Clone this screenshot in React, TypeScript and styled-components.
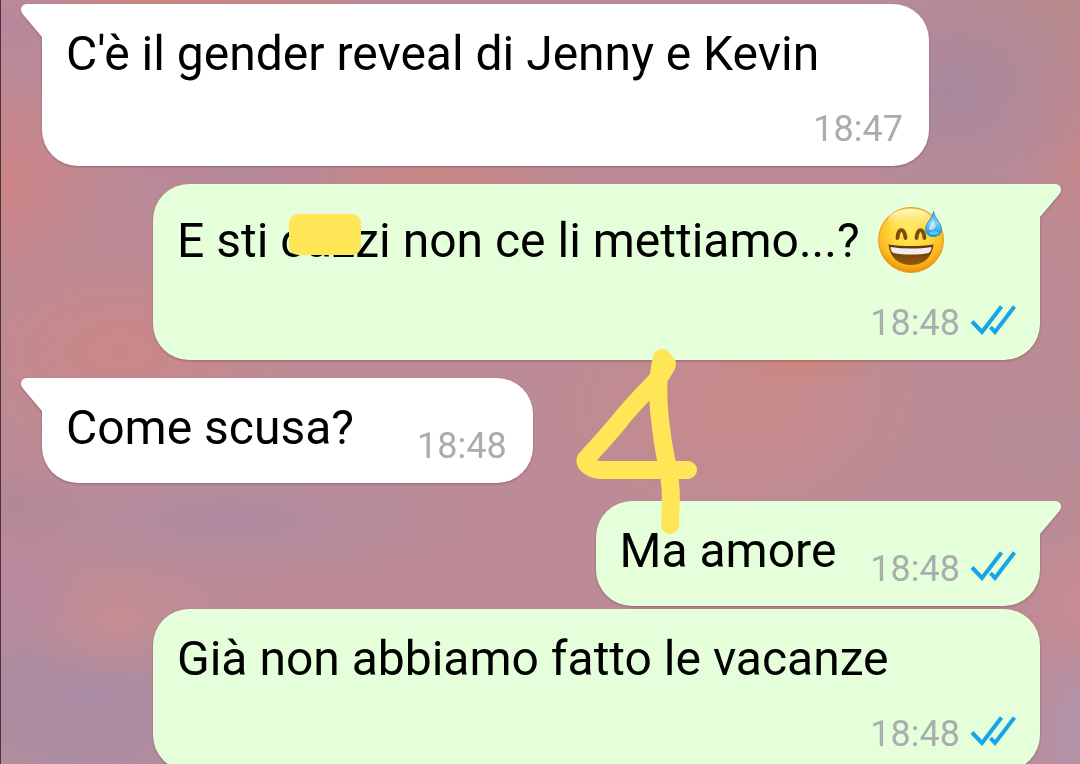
import React from "react";
import styled, { createGlobalStyle, css } from "styled-components";

const GlobalStyle = createGlobalStyle`
  * { box-sizing: border-box; }
  body { margin: 0; background: #bd8b95; }
`;

const Chat = styled.main`
  position: relative;
  height: 100vh;
  overflow: hidden;
  display: flex;
  flex-direction: column;
  padding: 4px 40px 0 41px;
  border-left: 1px solid #4d3239;
  font-family: Roboto, "Liberation Sans", sans-serif;
  color: #000;
  background:
    radial-gradient(ellipse 110px 90px at 1% 3%, #b7889c, transparent),
    radial-gradient(ellipse 110px 120px at 0% 24%, #cd8486, transparent),
    radial-gradient(ellipse 220px 30px at 14% 0%, #cc8682, transparent),
    radial-gradient(ellipse 150px 130px at 88% 12%, #a8889d, transparent),
    radial-gradient(ellipse 60px 130px at 100% 20%, #c3878a, transparent),
    radial-gradient(ellipse 160px 100px at 100% 2%, #b68a8b, transparent),
    radial-gradient(ellipse 140px 30px at 40% 23%, #c98684, transparent),
    radial-gradient(ellipse 160px 60px at 22% 23%, #b5879a, transparent),
    radial-gradient(ellipse 170px 100px at 11% 46%, #cb8787, transparent),
    radial-gradient(ellipse 90px 30px at 74% 47%, #cd857c, transparent),
    radial-gradient(ellipse 190px 120px at 69% 53%, #c98a8a, transparent),
    radial-gradient(ellipse 90px 50px at 1% 66%, #b38796, transparent),
    radial-gradient(ellipse 260px 70px at 21% 68%, #ae8ba0, transparent),
    radial-gradient(ellipse 90px 70px at 0% 77%, #b889a2, transparent),
    radial-gradient(ellipse 110px 70px at 11% 81%, #c78d92, transparent),
    radial-gradient(ellipse 240px 130px at 8% 90%, #a98ba4, transparent),
    radial-gradient(ellipse 260px 120px at 6% 98%, #b08f9e, transparent),
    radial-gradient(ellipse 60px 80px at 100% 79%, #c98b93, transparent),
    radial-gradient(ellipse 70px 130px at 100% 96%, #b094ab, transparent),
    radial-gradient(ellipse 260px 160px at 96% 58%, #b78c96, transparent),
    #bd8b95;
`;

type Side = "in" | "out";

const Bubble = styled.article<{ $side: Side; $wide?: boolean; $tail?: boolean; $joined?: boolean }>`
  position: relative;
  flex: none;
  display: flex;
  align-self: ${(p) => (p.$side === "in" ? "flex-start" : "flex-end")};
  margin-top: ${(p) => (p.$joined ? 3 : 18)}px;
  padding: 22px ${(p) => (p.$side === "in" ? 26 : 24)}px 16px 24px;
  border-radius: 36px;
  background: ${(p) => (p.$side === "in" ? "#ffffff" : "#e5ffdb")};
  color: ${(p) => (p.$side === "in" ? "#ffffff" : "#e5ffdb")};
  filter: drop-shadow(0 1px 1px rgba(60, 20, 30, 0.3));

  &:first-of-type { margin-top: 0; }

  ${(p) =>
    p.$wide
      ? css`
          flex-direction: column;
          gap: 26px;
          width: calc(100% - 111px);
        `
      : css`
          align-items: flex-end;
          gap: ${p.$side === "in" ? 63 : 34}px;
        `}
  ${(p) => p.$tail && (p.$side === "in" ? "border-top-left-radius: 0;" : "border-top-right-radius: 0;")}
`;

const TailShape = styled.svg<{ $side: Side }>`
  position: absolute;
  top: 0;
  ${(p) => (p.$side === "in" ? "left: -21px;" : "right: -21px; transform: scaleX(-1);")}
`;

const Text = styled.p<{ $inline?: boolean }>`
  display: flex;
  align-items: center;
  gap: 17px;
  margin: 0;
  padding-bottom: ${(p) => (p.$inline ? 11 : 0)}px;
  font-size: 48px;
  line-height: 56px;
  color: #000;
  white-space: nowrap;
`;

const Meta = styled.footer`
  display: flex;
  align-self: flex-end;
  gap: 10px;
  font-size: 36px;
  line-height: 42px;
  color: #a8adad;
`;

const Ticks = styled.svg`
  margin-top: 2px;
`;

const Censored = styled.span`
  position: relative;

  &::after {
    content: "";
    position: absolute;
    top: 2px;
    left: 9px;
    width: 72px;
    height: 41px;
    border-radius: 9px;
    background: #ffe657;
  }
`;

const Drawing = styled.svg`
  position: absolute;
  top: 340px;
  left: 569px;
  pointer-events: none;
`;

function Tail({ side }: { side: Side }) {
  return (
    <TailShape $side={side} width="22" height="34" viewBox="0 0 22 34" aria-hidden="true">
      <path d="M22 0H6C1 0-2 5 1.500 10L21 33H22Z" fill="currentColor" />
    </TailShape>
  );
}

function ReadTicks() {
  return (
    <Ticks width="46" height="31" viewBox="0 0 46 31" role="img" aria-label="Letto">
      <g fill="none" stroke="#16a5e8" strokeWidth="4">
        <path d="M2 17.500L12 28L31.500 2.500" />
        <path d="M20.500 23L25 28L44.500 2.500" />
      </g>
    </Ticks>
  );
}

function SweatSmile() {
  return (
    <svg width="68" height="70" viewBox="0 1 68 70" role="img" aria-label="😅">
      <defs>
        <radialGradient id="face" cx="50%" cy="36%" r="66%">
          <stop offset="0" stopColor="#ffe95c" />
          <stop offset="0.450" stopColor="#ffd93f" />
          <stop offset="0.750" stopColor="#fcba22" />
          <stop offset="1" stopColor="#e98a0c" />
        </radialGradient>
        <linearGradient id="shine" x1="0" y1="0" x2="0" y2="1">
          <stop offset="0" stopColor="#fffde0" stopOpacity="0.900" />
          <stop offset="1" stopColor="#ffe969" stopOpacity="0" />
        </linearGradient>
        <linearGradient id="drop" x1="0" y1="0" x2="0" y2="1">
          <stop offset="0" stopColor="#4fa5d0" />
          <stop offset="0.450" stopColor="#7dcdf2" />
          <stop offset="1" stopColor="#128fe2" />
        </linearGradient>
        <linearGradient id="mouth" x1="0" y1="0" x2="0" y2="1">
          <stop offset="0" stopColor="#5f3405" />
          <stop offset="1" stopColor="#96590b" />
        </linearGradient>
      </defs>
      <circle cx="34" cy="35" r="32.500" fill="url(#face)" stroke="#eb9b1a" strokeWidth="1" />
      <ellipse cx="33" cy="15" rx="22" ry="11" fill="url(#shine)" />
      <path
        d="M20.500 33C21 22.500 27.500 22.500 28.500 33M39.500 33C40.500 22.500 46.500 22.500 47.500 33"
        fill="none"
        stroke="#7d4c08"
        strokeWidth="3.800"
        strokeLinecap="round"
      />
      <path d="M11.500 39.500C26 41.500 42 41.500 56.500 39.500C55 53 46 60 34 60S13 53 11.500 39.500Z" fill="url(#mouth)" />
      <path d="M13.500 42C27 44 41 44 54.500 42C54.500 45 53.500 47 51.500 48C41 50 27 50 16.500 48C14.500 47 13.500 45 13.500 42Z" fill="#efedf0" />
      <path d="M56.500 6.500C58 14 64.500 18 64.500 24.500C64.500 29 61 31.500 56.500 31.500S48.500 29 48.500 24.500C48.500 18 55 14 56.500 6.500Z" fill="url(#drop)" stroke="#2f94c8" strokeWidth="1" />
      <path d="M56 14C55 19 51.500 21 52 24C53 26 57 25 58.500 22C59 19 57 17 56 14Z" fill="#d5f4fe" opacity="0.750" />
      <ellipse cx="57" cy="28" rx="4.500" ry="1.800" fill="#5cc8fa" />
    </svg>
  );
}

type MessageProps = {
  side: Side;
  time: string;
  wide?: boolean;
  tail?: boolean;
  joined?: boolean;
  children: React.ReactNode;
};

function Message({ side, time, wide, tail, joined, children }: MessageProps) {
  return (
    <Bubble $side={side} $wide={wide} $tail={tail} $joined={joined}>
      {tail && <Tail side={side} />}
      <Text $inline={!wide}>{children}</Text>
      <Meta>
        <time>{time}</time>
        {side === "out" && <ReadTicks />}
      </Meta>
    </Bubble>
  );
}

export default function App() {
  return (
    <>
      <GlobalStyle />
      <Chat>
        <Message side="in" time="18:47" wide tail>
          C'è il gender reveal di Jenny e Kevin
        </Message>
        <Message side="out" time="18:48" wide tail>
          <span>
            E sti <Censored>cazzi</Censored> non ce li mettiamo...?
          </span>
          <SweatSmile />
        </Message>
        <Message side="in" time="18:48" tail>
          Come scusa?
        </Message>
        <Message side="out" time="18:48" tail>
          Ma amore
        </Message>
        <Message side="out" time="18:48" wide joined>
          Già non abbiamo fatto le vacanze
        </Message>
        <Drawing width="140" height="204" viewBox="570 340 140 204" aria-hidden="true">
          <path
            d="M662 358L667 364Q664 372 655 382C642 395 628 410 617 424C607 436 596 448 586 459C583 465 594 470 602 470H688M662 358C657 376 658 396 659 410C661 430 663 446 667 464C672 484 671 500 670 525"
            fill="none"
            stroke="#ffe657"
            strokeWidth="18"
            strokeLinecap="round"
            strokeLinejoin="round"
          />
        </Drawing>
      </Chat>
    </>
  );
}
